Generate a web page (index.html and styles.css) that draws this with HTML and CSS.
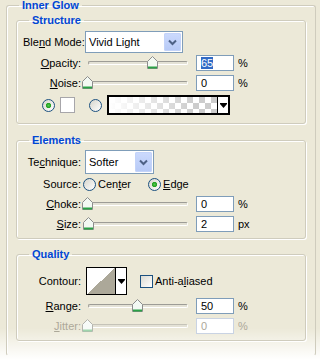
FILE: index.html
```html
<!DOCTYPE html>
<html lang="en">

<head>
    <meta charset="UTF-8">
    <meta name="viewport" content="width=device-width, initial-scale=1.0">
    <title>Inner Glow</title>
    <link rel="stylesheet" href="styles.css">
</head>

<body>
    <fieldset class="outer">
        <legend>Inner Glow</legend>

        <!-- Structure -->
        <fieldset class="group structure">
            <legend>Structure</legend>

            <div class="row tall">
                <span class="lbl">Ble<u>n</u>d Mode:</span>
                <div class="combo blend">
                    <span class="combo-text">Vivid Light</span>
                    <span class="combo-btn"><svg width="15" height="18" viewBox="0 0 15 18"><path d="M4 7.5 L7.5 11 L11 7.5" fill="none" stroke="#4D6185" stroke-width="2"/></svg></span>
                </div>
            </div>

            <div class="row">
                <span class="lbl"><u>O</u>pacity:</span>
                <div class="slider">
                    <div class="track"></div>
                    <svg class="thumb" style="left:62px" width="11" height="13" viewBox="0 0 11 13"><path d="M0.5 5.5 L5.5 0.5 L10.5 5.5 V12.5 H0.5 Z" fill="#f3f9f3" stroke="#8c8c8c"/><path d="M1 11.5 H10" stroke="#2aa146" stroke-width="2"/></svg>
                </div>
                <div class="field"><span class="sel">65</span></div>
                <span class="unit">%</span>
            </div>

            <div class="row">
                <span class="lbl"><u>N</u>oise:</span>
                <div class="slider">
                    <div class="track"></div>
                    <svg class="thumb" style="left:-3px" width="11" height="13" viewBox="0 0 11 13"><path d="M0.5 5.5 L5.5 0.5 L10.5 5.5 V12.5 H0.5 Z" fill="#f3f9f3" stroke="#8c8c8c"/><path d="M1 11.5 H10" stroke="#2aa146" stroke-width="2"/></svg>
                </div>
                <div class="field">0</div>
                <span class="unit">%</span>
            </div>

            <div class="row swatches">
                <span class="radio on"></span>
                <span class="swatch"></span>
                <span class="radio"></span>
                <div class="gradient">
                    <span class="gradient-fill"></span>
                    <span class="gradient-btn"><svg width="7" height="5" viewBox="0 0 7 5"><path d="M0 0 H7 V1 L3.5 5 L0 1 Z" fill="#000"/></svg></span>
                </div>
            </div>
        </fieldset>

        <!-- Elements -->
        <fieldset class="group elements">
            <legend>Elements</legend>

            <div class="row tall">
                <span class="lbl">Te<u>c</u>hnique:</span>
                <div class="combo technique">
                    <span class="combo-text">Softer</span>
                    <span class="combo-btn"><svg width="15" height="18" viewBox="0 0 15 18"><path d="M4 7.5 L7.5 11 L11 7.5" fill="none" stroke="#4D6185" stroke-width="2"/></svg></span>
                </div>
            </div>

            <div class="row">
                <span class="lbl">Source:</span>
                <span class="radio src"></span>
                <span class="opt">Cen<u>t</u>er</span>
                <span class="radio on src"></span>
                <span class="opt"><u>E</u>dge</span>
            </div>

            <div class="row">
                <span class="lbl"><u>C</u>hoke:</span>
                <div class="slider">
                    <div class="track"></div>
                    <svg class="thumb" style="left:-3px" width="11" height="13" viewBox="0 0 11 13"><path d="M0.5 5.5 L5.5 0.5 L10.5 5.5 V12.5 H0.5 Z" fill="#f3f9f3" stroke="#8c8c8c"/><path d="M1 11.5 H10" stroke="#2aa146" stroke-width="2"/></svg>
                </div>
                <div class="field">0</div>
                <span class="unit">%</span>
            </div>

            <div class="row">
                <span class="lbl"><u>S</u>ize:</span>
                <div class="slider">
                    <div class="track"></div>
                    <svg class="thumb" style="left:-2px" width="11" height="13" viewBox="0 0 11 13"><path d="M0.5 5.5 L5.5 0.5 L10.5 5.5 V12.5 H0.5 Z" fill="#f3f9f3" stroke="#8c8c8c"/><path d="M1 11.5 H10" stroke="#2aa146" stroke-width="2"/></svg>
                </div>
                <div class="field">2</div>
                <span class="unit">px</span>
            </div>
        </fieldset>

        <!-- Quality -->
        <fieldset class="group quality">
            <legend>Quality</legend>

            <div class="row contour-row">
                <span class="lbl">Contour:</span>
                <div class="contour">
                    <span class="contour-curve"></span>
                    <span class="contour-btn"><svg width="7" height="5" viewBox="0 0 7 5"><path d="M0 0 H7 V1 L3.5 5 L0 1 Z" fill="#000"/></svg></span>
                </div>
                <span class="check"></span>
                <span class="opt">Anti-a<u>l</u>iased</span>
            </div>

            <div class="row">
                <span class="lbl"><u>R</u>ange:</span>
                <div class="slider">
                    <div class="track"></div>
                    <svg class="thumb" style="left:47px" width="11" height="13" viewBox="0 0 11 13"><path d="M0.5 5.5 L5.5 0.5 L10.5 5.5 V12.5 H0.5 Z" fill="#f3f9f3" stroke="#8c8c8c"/><path d="M1 11.5 H10" stroke="#2aa146" stroke-width="2"/></svg>
                </div>
                <div class="field">50</div>
                <span class="unit">%</span>
            </div>

            <div class="row disabled">
                <span class="lbl"><u>J</u>itter:</span>
                <div class="slider">
                    <div class="track"></div>
                    <svg class="thumb" style="left:-3px" width="11" height="13" viewBox="0 0 11 13"><path d="M0.5 5.5 L5.5 0.5 L10.5 5.5 V12.5 H0.5 Z" fill="#f7fbf8" stroke="#b4b4ae"/><path d="M1 11.5 H10" stroke="#9fd4ac" stroke-width="2"/></svg>
                </div>
                <div class="field">0</div>
                <span class="unit">%</span>
            </div>
        </fieldset>
    </fieldset>
</body>

</html>
```

FILE: styles.css
```css
html {
    height: 360px;
    overflow: hidden;
}

body {
    margin: 0;
    height: 360px;
    overflow: hidden;
    font-family: "Liberation Sans", Arial, sans-serif;
    font-size: 11px;
    color: #000;
    background: linear-gradient(to bottom, rgba(255, 255, 255, 0) 328px, #fff 360px), #ECE9D8;
}

/* group boxes */
fieldset {
    margin: 0;
    min-width: 0;
    border: 1px solid #CFCCBD;
    border-radius: 3px;
    box-shadow: inset 1px 1px 0 #fff, 1px 1px 0 #fff;
}

legend {
    padding: 0 3px;
    margin-left: 6px;
    line-height: 12px;
    font-weight: bold;
    color: #0046D5;
}

/* the outer box runs on past the faded bottom edge */
.outer {
    margin: -1px 4px 0 6px;
    padding: 3px 9px 14px;
    border-bottom-color: transparent;
    box-shadow: inset 1px 1px 0 #fff;
}

.outer > legend {
    margin-left: 3px;
}

.group {
    padding: 4px 6px 6px;
}

.elements {
    margin-top: 10px;
    padding-bottom: 4px;
}

.quality {
    margin-top: 9px;
    padding-top: 6px;
    padding-bottom: 4px;
}

/* rows */
.row {
    display: flex;
    align-items: center;
    height: 20px;
}

.row.tall {
    height: 24px;
}

.structure .row.tall {
    height: 23px;
}

.lbl {
    width: 58px;
    margin-right: 4px;
    text-align: right;
    white-space: nowrap;
    flex: none;
}

.unit {
    margin-left: 4px;
}

.opt {
    margin-left: 2px;
    white-space: nowrap;
}

/* combo boxes */
.combo {
    display: flex;
    align-items: center;
    justify-content: space-between;
    box-sizing: border-box;
    height: 22px;
    padding: 1px 1px 1px 3px;
    background: #fff;
    border: 1px solid #7F9DB9;
}

.blend {
    width: 98px;
}

.technique {
    width: 69px;
    height: 24px;
}

.combo-btn {
    display: flex;
    align-items: center;
    justify-content: center;
    width: 17px;
    height: 100%;
    border-radius: 2px;
    background: linear-gradient(#CCDAFD, #B6C9F6);
    box-shadow: inset 0 0 0 1px #C3D3F9;
}

/* sliders */
.slider {
    position: relative;
    width: 108px;
    height: 20px;
    flex: none;
}

.track {
    margin: 8px 5px 0 3px;
    height: 2px;
    border: 1px solid;
    border-color: #9D9C96 #fff #fff #9D9C96;
    border-radius: 2px;
    background: #E4E2D6;
}

.thumb {
    position: absolute;
    top: 3px;
}

.field {
    box-sizing: border-box;
    width: 38px;
    height: 16px;
    margin-left: 3px;
    padding: 0 4px;
    line-height: 14px;
    background: #fff;
    border: 1px solid #7F9DB9;
}

.sel {
    background: #316AC5;
    color: #fff;
}

/* radios and checkbox */
.radio {
    flex: none;
    box-sizing: border-box;
    width: 13px;
    height: 13px;
    border: 1px solid #1C5180;
    border-radius: 50%;
    background: linear-gradient(135deg, #D6D5CC, #fff);
}

.radio.on {
    background: radial-gradient(circle, #55C94F 0, #21A121 2.2px, rgba(33, 161, 33, 0) 3px), linear-gradient(135deg, #D6D5CC, #fff);
}

.src {
    margin-left: -2px;
}

.src.on {
    margin-left: 17px;
}

.check {
    flex: none;
    box-sizing: border-box;
    width: 13px;
    height: 13px;
    margin-left: 13px;
    border: 1px solid #1C5180;
    background: linear-gradient(135deg, #DCDBD2, #fff);
}

/* colour swatch and gradient */
.swatches {
    height: 24px;
}

.swatches .radio {
    margin-left: 19px;
}

.swatches .radio + .swatch + .radio {
    margin-left: 14px;
}

.swatch {
    width: 15px;
    height: 16px;
    box-sizing: border-box;
    margin-left: 5px;
    background: #fff;
    border: 1px solid #A7A6AA;
}

.gradient {
    display: flex;
    box-sizing: border-box;
    width: 123px;
    height: 20px;
    margin-left: 5px;
    border: 2px solid #000;
    background: #fff;
}

.gradient-fill {
    flex: 1;
    background:
        linear-gradient(to right, #fff 0, rgba(255, 255, 255, 0) 80%),
        repeating-conic-gradient(#CCC 0 25%, #fff 0 50%) 0 0 / 12px 12px;
}

.gradient-btn,
.contour-btn {
    display: flex;
    align-items: center;
    justify-content: center;
    width: 10px;
    border-left: 1px solid #000;
    background: #fff;
}

/* contour */
.contour-row {
    height: 30px;
}

.contour {
    display: flex;
    box-sizing: border-box;
    width: 41px;
    height: 28px;
    margin-left: 1px;
    border: 1px solid #000;
}

.contour-curve {
    flex: 1;
    background: linear-gradient(to bottom right, #fff 50%, #ACA899 50%);
}

/* disabled */
.disabled .lbl,
.disabled .unit,
.disabled .field {
    color: #ACA899;
}

.disabled .field {
    border-color: #C9D3E3;
}

.disabled .track {
    border-color: #C5C3B8 #fff #fff #C5C3B8;
}
```
